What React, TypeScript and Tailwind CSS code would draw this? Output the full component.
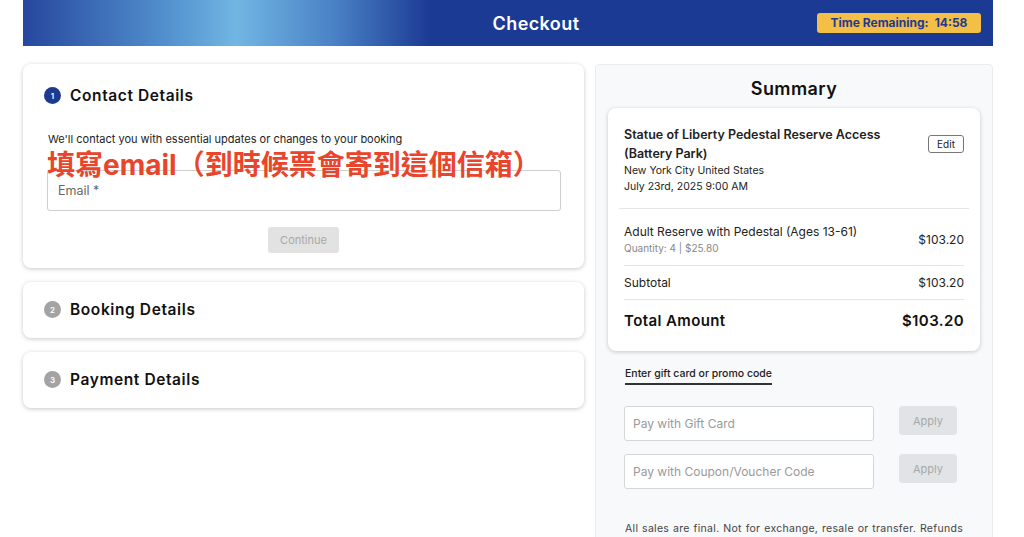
import React from "react";

const FONT = "font-['Inter','Noto_Sans_CJK_TC',sans-serif]";

function StepCard({ n, title, active }: { n: number; title: string; active?: boolean }) {
  return (
    <div className="flex items-center gap-[9px]">
      <span
        className={
          active
            ? "flex h-[17px] w-[17px] items-center justify-center rounded-full bg-[#1e3a8f] text-[8px] font-semibold text-white"
            : "flex h-[17px] w-[17px] items-center justify-center rounded-full bg-[#a3a3a3] text-[8px] font-semibold text-white"
        }
      >
        {n}
      </span>
      <h2 className="text-[15.5px] font-semibold tracking-[0.6px] text-[#111]">{title}</h2>
    </div>
  );
}

export default function App() {
  return (
    <div className={`${FONT} h-[537px] w-[1024px] overflow-hidden bg-white`}>
      {/* header */}
      <div className="ml-[23px] w-[970px] h-[46px] relative flex items-center justify-center pl-[56px] bg-[linear-gradient(90deg,#27479e_0%,#4f8ccb_14%,#71b6e3_22%,#4a82c6_32%,#1b3a93_42%,#1b3a93_100%)]">
        <h1 className="text-[18px] font-semibold tracking-[0.4px] text-white">Checkout</h1>
        <div className="absolute right-[12px] top-[13px] flex h-[20px] w-[164px] items-center justify-center gap-[6px] rounded-[3px] bg-[#f4bf47] text-[12px] font-bold text-[#1e3a8f]">
          <span>Time Remaining:</span>
          <span>14:58</span>
        </div>
      </div>

      <div className="ml-[23px] mt-[18px] flex w-[970px] gap-[11px]">
        {/* left */}
        <div className="flex w-[561px] flex-col gap-[14px]">
          <div className="relative rounded-[8px] bg-white px-[21px] pt-[20px] pb-[15px] shadow-[0_1px_4px_rgba(0,0,0,0.22)]">
            <StepCard n={1} title="Contact Details" active />
            <p className="mt-[24px] pl-[4px] text-[11px] text-[#222]">
              We'll contact you with essential updates or changes to your booking
            </p>
            {/* annotation laid over the form */}
            <div className="absolute left-[24px] top-[87px] text-[28px] font-bold leading-none text-[#e8452c]">
              填寫email（到時候票會寄到這個信箱）
            </div>
            <div className="mt-[22px] ml-[3px] flex h-[41px] w-[514px] items-center rounded-[3px] border border-[#cfcfcf] px-[10px] pt-[2px] text-[12.5px] text-[#666]">
              Email *
            </div>
            <div className="mt-[16px] flex justify-center">
              <button className="h-[26px] w-[71px] rounded-[3px] bg-[#e2e2e2] text-[11px] text-[#a8a8a8]">Continue</button>
            </div>
          </div>
          <div className="flex h-[56px] items-center rounded-[8px] bg-white px-[21px] shadow-[0_1px_4px_rgba(0,0,0,0.22)]">
            <StepCard n={2} title="Booking Details" />
          </div>
          <div className="flex h-[56px] items-center rounded-[8px] bg-white px-[21px] shadow-[0_1px_4px_rgba(0,0,0,0.22)]">
            <StepCard n={3} title="Payment Details" />
          </div>
        </div>

        {/* right */}
        <div className="h-[500px] w-[398px] rounded-t-[4px] border border-[#ececec] bg-[#f8f9fb] px-[12px]">
          <h2 className="mt-[10px] text-center text-[18px] font-semibold tracking-[0.4px] text-[#111]">Summary</h2>
          <div className="mt-[6px] rounded-[8px] bg-white pb-[18px] shadow-[0_1px_4px_rgba(0,0,0,0.2)]">
            <div className="flex justify-between px-[16px] pt-[17px] pb-[13px]">
              <div>
                <div className="text-[12.5px] font-semibold leading-[19px] text-[#222]">
                  Statue of Liberty Pedestal Reserve Access
                  <br />
                  (Battery Park)
                </div>
                <div className="text-[10.5px] leading-[16px] text-[#222]">New York City United States</div>
                <div className="text-[10.5px] leading-[16px] text-[#222]">July 23rd, 2025 9:00 AM</div>
              </div>
              <button className="mt-[10px] h-[18px] w-[36px] rounded-[3px] border border-[#777] text-[10px] text-[#222]">Edit</button>
            </div>
            <div className="mx-[11px] border-t border-[#e6e6e6]" />
            <div className="mx-[16px] flex items-center justify-between border-b border-[#e6e6e6] pt-[14px] pb-[9px]">
              <div>
                <div className="text-[12px] text-[#222]">Adult Reserve with Pedestal (Ages 13-61)</div>
                <div className="text-[10px] text-[#888]">Quantity: 4 | $25.80</div>
              </div>
              <div className="text-[12px] text-[#222]">$103.20</div>
            </div>
            <div className="mx-[16px] flex h-[34px] items-center justify-between border-b border-[#e6e6e6] text-[12px] text-[#222]">
              <span>Subtotal</span>
              <span>$103.20</span>
            </div>
            <div className="mx-[16px] flex items-center justify-between pt-[10px] text-[15px] font-semibold tracking-[0.4px] text-[#111]">
              <span>Total Amount</span>
              <span>$103.20</span>
            </div>
          </div>

          <div className="mt-[15px] ml-[17px] inline-block border-b-2 border-[#333] pb-[2px] text-[10.5px] font-medium text-[#222]">
            Enter gift card or promo code
          </div>

          <div className="mt-[21px] flex flex-col gap-[13px] pl-[16px]">
            <div className="flex gap-[25px]">
              <div className="flex h-[35px] w-[250px] items-center rounded-[3px] border border-[#d6d6d6] bg-white px-[8px] text-[12px] text-[#9a9a9a]">
                Pay with Gift Card
              </div>
              <button className="h-[29px] w-[58px] rounded-[3px] bg-[#e2e3e6] text-[11px] text-[#a8a8a8]">Apply</button>
            </div>
            <div className="flex gap-[25px]">
              <div className="flex h-[35px] w-[250px] items-center rounded-[3px] border border-[#d6d6d6] bg-white px-[8px] text-[12px] text-[#9a9a9a]">
                Pay with Coupon/Voucher Code
              </div>
              <button className="h-[29px] w-[58px] rounded-[3px] bg-[#e2e3e6] text-[11px] text-[#a8a8a8]">Apply</button>
            </div>
          </div>

          <p className="mt-[33px] px-[17px] text-justify text-[10.5px] leading-[14px] tracking-[0.3px] text-[#444] [text-align-last:justify]">
            All sales are final. Not for exchange, resale or transfer. Refunds
          </p>
        </div>
      </div>
    </div>
  );
}
